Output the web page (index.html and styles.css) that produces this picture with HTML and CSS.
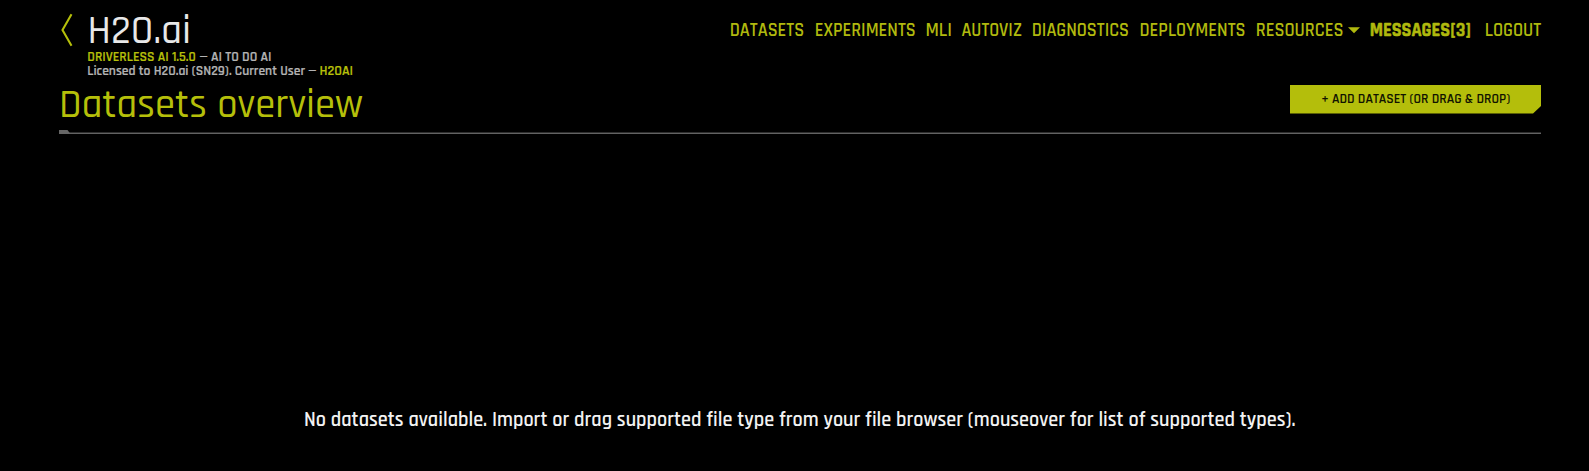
FILE: index.html
```html
<!DOCTYPE html>
<html lang="en">
<head>
<meta charset="utf-8">
<title>H2O.ai Driverless AI</title>
<link rel="stylesheet" href="styles.css">
</head>
<body>
<header class="header">
  <a class="back" href="#" aria-label="Back"><svg width="14" height="34" viewBox="0 0 14 34"><path d="M11.5 1.2 2.5 17l9 15.8"/></svg></a>
  <div class="brand">
    <svg class="label logo" width="99" height="46"><text x="-2.5" y="35.6" textLength="103.5" lengthAdjust="spacingAndGlyphs">H2O.ai</text></svg>
    <div class="meta">
      <svg class="label accent" width="107" height="14"><text x="-.7" y="8.3" textLength="108.5" lengthAdjust="spacingAndGlyphs">DRIVERLESS AI 1.5.0</text></svg>
      <svg class="label" width="71" height="14"><text x="-.5" y="8.3" textLength="72" lengthAdjust="spacingAndGlyphs">— AI TO DO AI</text></svg>
    </div>
    <div class="meta">
      <svg class="label" width="228" height="14"><text x="-.7" y="8.3" textLength="229" lengthAdjust="spacingAndGlyphs">Licensed to H2O.ai (SN29). Current User —</text></svg>
      <svg class="label accent" width="32" height="14"><text x="-1.5" y="8.3" textLength="33.5" lengthAdjust="spacingAndGlyphs">H2OAI</text></svg>
    </div>
  </div>
  <nav class="nav">
    <a href="#"><svg class="label" width="73" height="20"><text x="-1.3" y="17" textLength="74.5" lengthAdjust="spacingAndGlyphs">DATASETS</text></svg></a>
    <a href="#"><svg class="label" width="99.5" height="20"><text x="-1.3" y="17" textLength="101" lengthAdjust="spacingAndGlyphs">EXPERIMENTS</text></svg></a>
    <a href="#"><svg class="label" width="23.5" height="20"><text x="-1.5" y="17" textLength="26.5" lengthAdjust="spacingAndGlyphs">MLI</text></svg></a>
    <a href="#"><svg class="label" width="60" height="20"><text x="-.5" y="17" textLength="60.5" lengthAdjust="spacingAndGlyphs">AUTOVIZ</text></svg></a>
    <a href="#"><svg class="label" width="96" height="20"><text x="-1.3" y="17" textLength="97.3" lengthAdjust="spacingAndGlyphs">DIAGNOSTICS</text></svg></a>
    <a href="#"><svg class="label" width="104.5" height="20"><text x="-1.5" y="17" textLength="106" lengthAdjust="spacingAndGlyphs">DEPLOYMENTS</text></svg></a>
    <a href="#"><svg class="label" width="103" height="20"><text x="-1.3" y="17" textLength="87.8" lengthAdjust="spacingAndGlyphs">RESOURCES</text><path d="M91 8.3h12l-6 6z"/></svg></a>
    <a class="messages" href="#"><svg class="label" width="103.5" height="20"><text x="-1.3" y="17" textLength="101.5" lengthAdjust="spacingAndGlyphs">MESSAGES[3]</text></svg></a>
    <a href="#"><svg class="label" width="55" height="20"><text x="-1.3" y="17" textLength="56.5" lengthAdjust="spacingAndGlyphs">LOGOUT</text></svg></a>
  </nav>
</header>
<main>
  <div class="heading">
    <h1><svg class="label" width="300" height="44"><text x="-3" y="36" textLength="304" lengthAdjust="spacingAndGlyphs">Datasets overview</text></svg></h1>
    <button class="add"><svg class="label" width="188" height="16"><text x="-.8" y="12" textLength="189" lengthAdjust="spacingAndGlyphs">+ ADD DATASET (OR DRAG &amp; DROP)</text></svg></button>
  </div>
  <svg class="rule" width="1482" height="5"><path class="line" d="M0 4h1482v1H0z"/><path class="line soft" d="M0 3h1482v1H0z"/><path class="tab" d="M0 1h8.5l3 4H0z"/></svg>
  <p class="empty"><svg class="label" width="990" height="28"><text x="-1" y="21" textLength="991.5" lengthAdjust="spacingAndGlyphs">No datasets available. Import or drag supported file type from your file browser (mouseover for list of supported types).</text></svg></p>
</main>
</body>
</html>
```
FILE: styles.css
```css
* { box-sizing: border-box; }
body {
  margin: 0;
  padding: 0 48px 0 59px;
  height: 471px;
  overflow: hidden;
  background: #000;
  color: #b3b3b3;
  font-family: Rajdhani, Roboto, "Liberation Sans", sans-serif;
  font-weight: 600;
}
a { color: inherit; text-decoration: none; }
svg { display: block; }
.label { overflow: visible; fill: currentColor; }
.header { display: flex; height: 81px; color: #b3b3b3; }
.back { width: 29px; padding: 13px 0 0 1px; }
.back path { fill: none; stroke: #b5bf0a; stroke-width: 2.1; }
.brand { padding-top: 7px; font-size: 13.6px; }
.logo { margin: 0 0 0 2px; font-size: 41px; font-weight: 500; color: #e8e8e8; }
.meta { display: flex; gap: 4.5px; height: 14px; }
.meta .label { stroke: currentColor; stroke-width: .2; }
.accent { color: #b5bf0a; }
.nav {
  display: flex;
  gap: 11.5px;
  margin-left: auto;
  padding-top: 19px;
  color: #b0b90e;
  font-size: 18.6px;
}
.messages { font-weight: 700; }
.messages text { stroke: currentColor; stroke-width: .5; }
.heading { display: flex; justify-content: space-between; height: 48px; }
h1 { margin: 0; padding-left: 3px; color: #b5bf0a; font-size: 40.5px; font-weight: 500; }
.add {
  display: flex;
  align-items: flex-start;
  width: 251px;
  height: 28.5px;
  margin: 4px 0 0;
  padding: 6px 0 0 32px;
  border: 0;
  background: #b4be0b;
  clip-path: polygon(0 0, 100% 0, 100% 21px, 243px 100%, 0 100%);
  color: #111300;
  font: 600 13.5px Rajdhani, Roboto, "Liberation Sans", sans-serif;
}
.rule .line { fill: #636363; }
.rule .soft { fill: #2e2e2e; }
.rule .tab { fill: #666; }
.empty { width: 990px; margin: 271px 0 0 246px; color: #f2f2f2; font-size: 21.5px; }
```
